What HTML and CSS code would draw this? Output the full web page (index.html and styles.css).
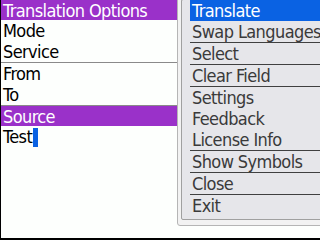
FILE: index.html
```html
<!doctype html>
<html lang="en">
<head>
    <meta charset="utf-8">
    <title>Translation Options</title>
    <link rel="stylesheet" href="styles.css">
</head>
<body>

<div class="screen">
    <!-- Main options list -->
    <div class="options">
        <div class="row row-title">Translation Options</div>
        <div class="row">Mode</div>
        <div class="row">Service</div>
        <div class="row row-sep">From</div>
        <div class="row">To</div>
        <div class="row row-sep row-title">Source</div>
        <div class="row">Test<span class="cursor"></span></div>
    </div>

    <!-- Popup menu -->
    <div class="menu">
        <div class="menu-inner">
            <div class="menu-item is-active">Translate</div>
            <div class="menu-item">Swap Languages</div>
            <div class="menu-item menu-sep">Select</div>
            <div class="menu-item menu-sep">Clear Field</div>
            <div class="menu-item menu-sep">Settings</div>
            <div class="menu-item">Feedback</div>
            <div class="menu-item">License Info</div>
            <div class="menu-item menu-sep">Show Symbols</div>
            <div class="menu-item menu-sep">Close</div>
            <div class="menu-item menu-sep">Exit</div>
        </div>
    </div>
</div>

</body>
</html>
```

FILE: styles.css
```css
:root {
    --purple: #9a31c9;
    --blue: #0a62e3;
    --row-h: 21px;
}

body {
    margin: 0;
    background: #000;
    font-family: "DejaVu Sans", sans-serif;
    font-stretch: condensed;
    font-size: 18px;
    letter-spacing: -0.6px;
}

.screen {
    position: relative;
    width: 320px;
    height: 240px;
    box-sizing: border-box;
    border-left: 1px solid #000;
    border-bottom: 2px solid #000;
    background: #fdfffd;
    overflow: hidden;
}

/* Left list */
.row {
    height: var(--row-h);
    line-height: 22px;
    padding-left: 2px;
    color: #000;
    white-space: nowrap;
}

.row-title {
    height: 20px;
    line-height: 21px;
    background: var(--purple);
    color: #fff;
}

.row-sep {
    border-top: 1px solid #8a8a8a;
}

.cursor {
    display: inline-block;
    width: 5px;
    height: 19px;
    margin-left: 1px;
    vertical-align: -4px;
    background: var(--blue);
}

/* Popup menu */
.menu {
    position: absolute;
    top: -5px;
    left: 176px;
    right: -8px;
    padding: 3px 3px 5px;
    border: 1px solid #b5b5b5;
    border-radius: 3px;
    background: #f2f2f2;
}

.menu-inner {
    padding: 0 2px 3px 8px;
    border: 1px solid #a0a0a0;
    border-radius: 2px;
    background: #e6e6ea;
}

.menu-item {
    height: var(--row-h);
    line-height: 22px;
    padding-left: 2px;
    color: #3a3a3a;
    white-space: nowrap;
    overflow: hidden;
}

.menu-item.is-active {
    background: var(--blue);
    color: #fff;
}

.menu-sep {
    border-top: 1px solid #404040;
}
```
